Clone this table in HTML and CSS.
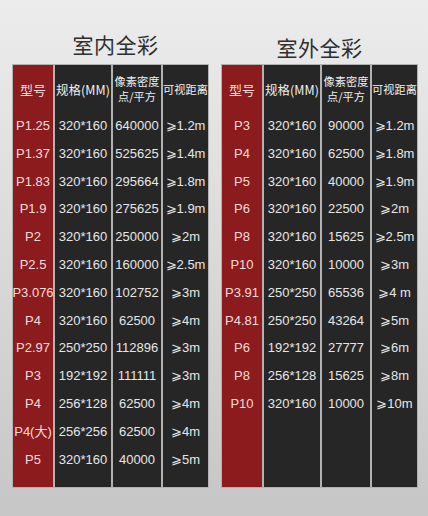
FILE: index.html
```html
<!DOCTYPE html>
<html lang="zh">
<head>
<meta charset="utf-8">
<link rel="stylesheet" href="styles.css">
</head>
<body>
<div class="page">
  <section class="panel panel-left">
    <h2 class="title title-left">室内全彩</h2>
    <div class="table">
      <div class="col col-model">
        <div class="head">型号</div>
        <div class="cell">P1.25</div><div class="cell">P1.37</div><div class="cell">P1.83</div><div class="cell">P1.9</div><div class="cell">P2</div><div class="cell">P2.5</div><div class="cell">P3.076</div><div class="cell">P4</div><div class="cell">P2.97</div><div class="cell">P3</div><div class="cell">P4</div><div class="cell">P4(大)</div><div class="cell">P5</div>
      </div>
      <div class="col col-spec">
        <div class="head">规格(MM)</div>
        <div class="cell">320*160</div><div class="cell">320*160</div><div class="cell">320*160</div><div class="cell">320*160</div><div class="cell">320*160</div><div class="cell">320*160</div><div class="cell">320*160</div><div class="cell">320*160</div><div class="cell">250*250</div><div class="cell">192*192</div><div class="cell">256*128</div><div class="cell">256*256</div><div class="cell">320*160</div>
      </div>
      <div class="col">
        <div class="head">像素密度<br>点/平方</div>
        <div class="cell">640000</div><div class="cell">525625</div><div class="cell">295664</div><div class="cell">275625</div><div class="cell">250000</div><div class="cell">160000</div><div class="cell">102752</div><div class="cell">62500</div><div class="cell">112896</div><div class="cell">111111</div><div class="cell">62500</div><div class="cell">62500</div><div class="cell">40000</div>
      </div>
      <div class="col">
        <div class="head">可视距离</div>
        <div class="cell">⩾1.2m</div><div class="cell">⩾1.4m</div><div class="cell">⩾1.8m</div><div class="cell">⩾1.9m</div><div class="cell">⩾2m</div><div class="cell">⩾2.5m</div><div class="cell">⩾3m</div><div class="cell">⩾4m</div><div class="cell">⩾3m</div><div class="cell">⩾3m</div><div class="cell">⩾4m</div><div class="cell">⩾4m</div><div class="cell">⩾5m</div>
      </div>
    </div>
  </section>
  <section class="panel panel-right">
    <h2 class="title title-right">室外全彩</h2>
    <div class="table">
      <div class="col col-model">
        <div class="head">型号</div>
        <div class="cell">P3</div><div class="cell">P4</div><div class="cell">P5</div><div class="cell">P6</div><div class="cell">P8</div><div class="cell">P10</div><div class="cell">P3.91</div><div class="cell">P4.81</div><div class="cell">P6</div><div class="cell">P8</div><div class="cell">P10</div>
      </div>
      <div class="col col-spec">
        <div class="head">规格(MM)</div>
        <div class="cell">320*160</div><div class="cell">320*160</div><div class="cell">320*160</div><div class="cell">320*160</div><div class="cell">320*160</div><div class="cell">320*160</div><div class="cell">250*250</div><div class="cell">250*250</div><div class="cell">192*192</div><div class="cell">256*128</div><div class="cell">320*160</div>
      </div>
      <div class="col">
        <div class="head">像素密度<br>点/平方</div>
        <div class="cell">90000</div><div class="cell">62500</div><div class="cell">40000</div><div class="cell">22500</div><div class="cell">15625</div><div class="cell">10000</div><div class="cell">65536</div><div class="cell">43264</div><div class="cell">27777</div><div class="cell">15625</div><div class="cell">10000</div>
      </div>
      <div class="col">
        <div class="head">可视距离</div>
        <div class="cell">⩾1.2m</div><div class="cell">⩾1.8m</div><div class="cell">⩾1.9m</div><div class="cell">⩾2m</div><div class="cell">⩾2.5m</div><div class="cell">⩾3m</div><div class="cell">⩾4 m</div><div class="cell">⩾5m</div><div class="cell">⩾6m</div><div class="cell">⩾8m</div><div class="cell">⩾10m</div>
      </div>
    </div>
  </section>
</div>
</body>
</html>
```

FILE: styles.css
```css
* { box-sizing: border-box; }
html, body { margin: 0; padding: 0; }
body {
  width: 428px;
  height: 516px;
  overflow: hidden;
  background: linear-gradient(180deg, #ececec 0%, #dddddd 40%, #c6c6c6 100%);
  font-family: "Liberation Sans", "Noto Sans CJK SC", sans-serif;
}
.page {
  display: flex;
  gap: 12px;
  padding-left: 12px;
}
.panel {
  display: flex;
  flex-direction: column;
}
.title {
  margin: 0;
  height: 64px;
  font-family: "Noto Sans CJK SC", sans-serif;
  font-weight: 400;
  font-size: 21px;
  color: #2e2e2e;
  text-align: center;
  letter-spacing: 0.5px;
}
.title-left { padding-top: 29px; padding-left: 10px; }
.title-right { padding-top: 32px; }
.table {
  display: grid;
  grid-template-columns: 40px 56px 48px 45px;
  column-gap: 2px;
  padding: 1px;
  background: #b2b2b2;
  height: 424px;
}
.col {
  background: #262626;
  color: #e6e6e6;
  display: flex;
  flex-direction: column;
  align-items: stretch;
}
.col-model {
  background: #8b1b1d;
  color: #f6dcdc;
}
.head {
  height: 47px;
  display: flex;
  align-items: center;
  justify-content: center;
  text-align: center;
  font-family: "Noto Sans CJK SC", sans-serif;
  font-size: 11.2px;
  line-height: 15px;
  white-space: nowrap;
  color: #f0f0f0;
  padding-top: 1px;
}
.col-model .head { color: #f6dcdc; font-size: 13px; }
.col-spec .head { font-size: 12.5px; margin: 0 -3px; }
.cell {
  height: 27.8px;
  line-height: 27.8px;
  text-align: center;
  font-size: 13px;
  white-space: nowrap;
  margin: 0 -3px;
}
```
